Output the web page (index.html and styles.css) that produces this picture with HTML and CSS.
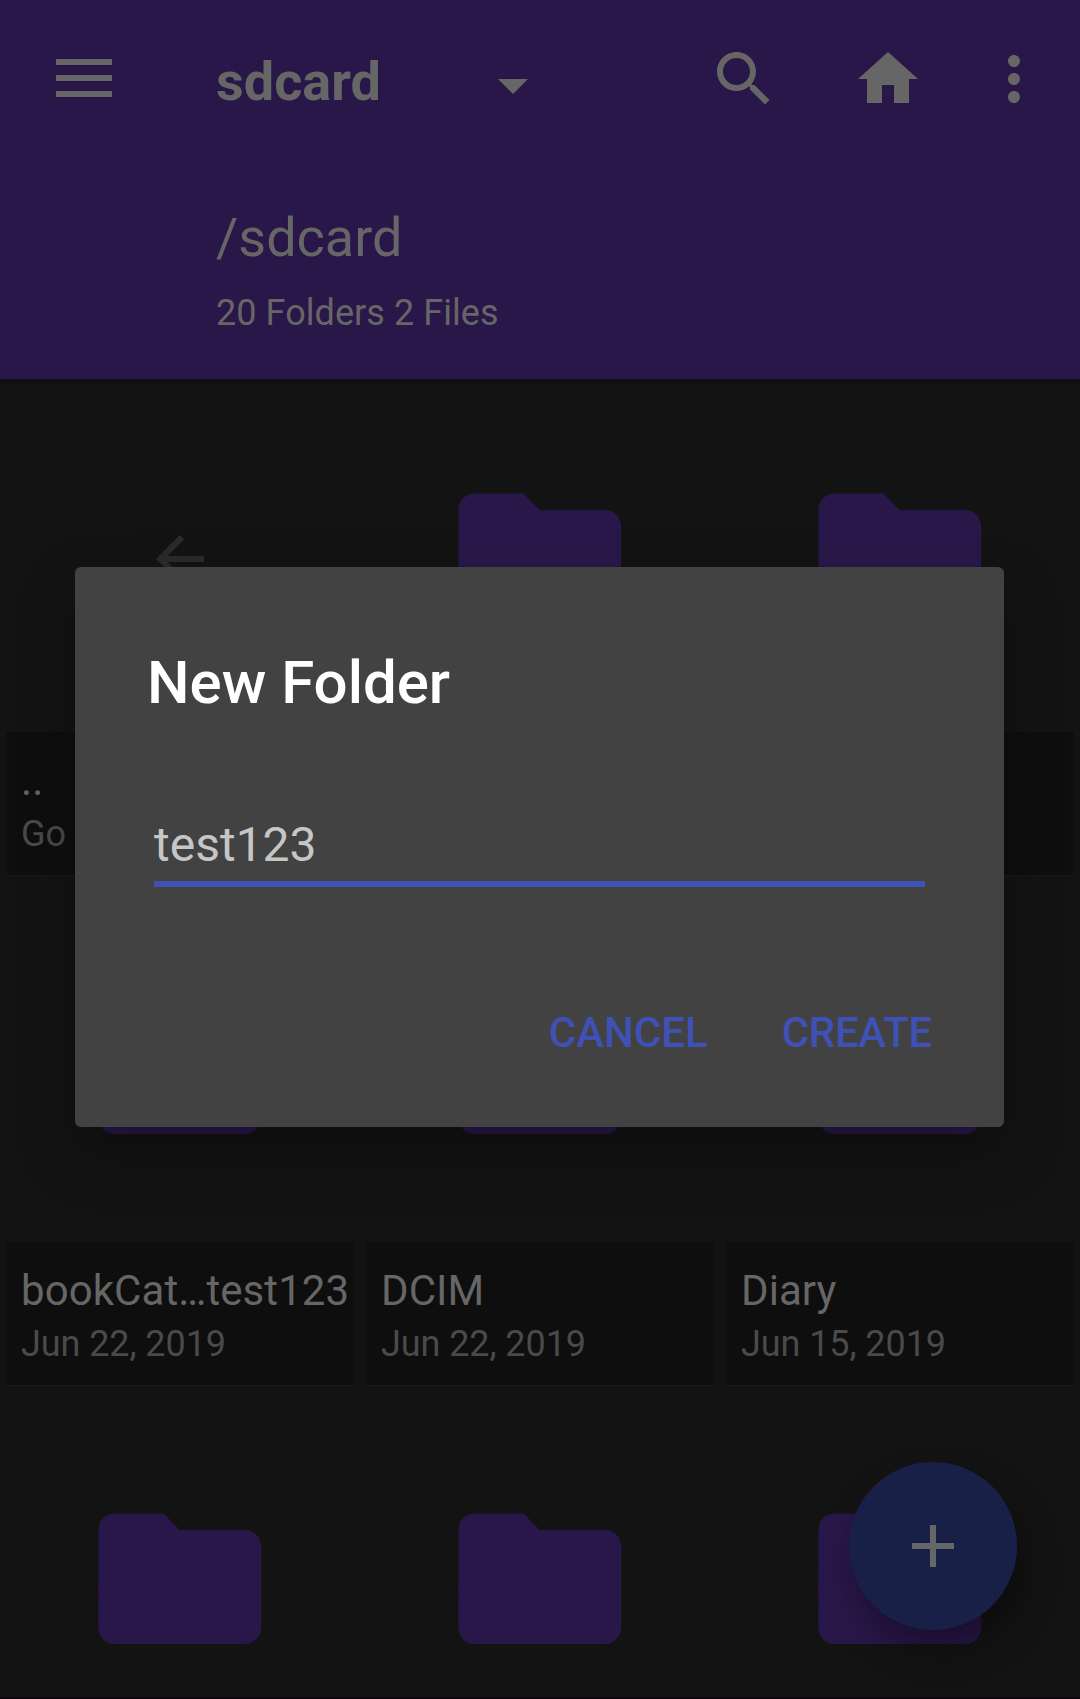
FILE: index.html
```html
<!DOCTYPE html>
<html lang="en">
<head>
<meta charset="utf-8">
<title>sdcard</title>
<link rel="stylesheet" href="styles.css">
</head>
<body>
<svg class="defs" width="0" height="0" aria-hidden="true">
  <symbol id="folder" viewBox="0 0 24 24"><path d="M10 4H4c-1.1 0-1.99.9-1.99 2L2 18c0 1.1.9 2 2 2h16c1.1 0 2-.9 2-2V8c0-1.1-.9-2-2-2h-8l-2-2z"/></symbol>
</svg>
<div class="screen">
  <header class="appbar">
    <div class="toolbar">
      <svg class="menu" viewBox="0 0 56 38"><path d="M0 0h56v6H0zM0 16h56v6H0zM0 32h56v6H0z"/></svg>
      <h1 class="title">sdcard</h1>
      <svg class="caret" viewBox="0 0 30 15"><path d="M0 0h30L15 15z"/></svg>
      <div class="actions">
        <svg class="icon" viewBox="0 0 24 24"><path d="M15.5 14h-.79l-.28-.27C15.41 12.59 16 11.11 16 9.5 16 5.91 13.09 3 9.5 3S3 5.91 3 9.5 5.91 16 9.5 16c1.61 0 3.09-.59 4.23-1.57l.27.28v.79l5 4.99L20.49 19l-4.99-5zm-6 0C7.01 14 5 11.99 5 9.5S7.01 5 9.5 5 14 7.01 14 9.5 11.99 14 9.5 14z"/></svg>
        <svg class="icon" viewBox="0 0 24 24"><path d="M10 20v-6h4v6h5v-8h3L12 3 2 12h3v8z"/></svg>
        <svg class="icon more" viewBox="0 0 24 24"><path d="M12 8c1.1 0 2-.9 2-2s-.9-2-2-2-2 .9-2 2 .9 2 2 2zm0 2c-1.1 0-2 .9-2 2s.9 2 2 2 2-.9 2-2-.9-2-2-2zm0 6c-1.1 0-2 .9-2 2s.9 2 2 2 2-.9 2-2-.9-2-2-2z"/></svg>
      </div>
    </div>
    <div class="path">/sdcard</div>
    <div class="count">20 Folders 2 Files</div>
  </header>
  <main class="grid">
    <div class="tile">
      <div class="thumb"><svg class="back" viewBox="0 0 24 24"><path d="M20 11H7.83l5.59-5.59L12 4l-8 8 8 8 1.41-1.41L7.83 13H20v-2z"/></svg></div>
      <div class="label"><div class="name">..</div><div class="date">Go</div></div>
    </div>
    <div class="tile"><div class="thumb"><svg class="folder"><use href="#folder"/></svg></div><div class="label"></div></div>
    <div class="tile"><div class="thumb"><svg class="folder"><use href="#folder"/></svg></div><div class="label"></div></div>
    <div class="tile">
      <div class="thumb"><svg class="folder"><use href="#folder"/></svg></div>
      <div class="label"><div class="name">bookCat…test123</div><div class="date">Jun 22, 2019</div></div>
    </div>
    <div class="tile">
      <div class="thumb"><svg class="folder"><use href="#folder"/></svg></div>
      <div class="label"><div class="name">DCIM</div><div class="date">Jun 22, 2019</div></div>
    </div>
    <div class="tile">
      <div class="thumb"><svg class="folder"><use href="#folder"/></svg></div>
      <div class="label"><div class="name">Diary</div><div class="date">Jun 15, 2019</div></div>
    </div>
    <div class="tile"><div class="thumb"><svg class="folder"><use href="#folder"/></svg></div></div>
    <div class="tile"><div class="thumb"><svg class="folder"><use href="#folder"/></svg></div></div>
    <div class="tile"><div class="thumb"><svg class="folder"><use href="#folder"/></svg></div></div>
  </main>
  <div class="fab"><svg viewBox="0 0 24 24"><path d="M19 13h-6v6h-2v-6H5v-2h6V5h2v6h6v2z"/></svg></div>
  <section class="dialog">
    <h2 class="dialog-title">New Folder</h2>
    <div class="field">test123</div>
    <div class="buttons"><span>CANCEL</span><span class="create">CREATE</span></div>
  </section>
</div>
</body>
</html>
```
FILE: styles.css
```css
* { box-sizing: border-box; margin: 0; padding: 0; }
body { background: #131313; font-family: Roboto, "Liberation Sans", sans-serif; overflow: hidden; }
svg { display: block; flex: none; fill: #666; }
.defs { position: absolute; }
.screen { position: relative; width: 1080px; height: 1699px; overflow: hidden; background: #131313; border-bottom: 2px solid #0c070b; }

.appbar { height: 379px; background: #291749; color: #666; box-shadow: 0 2px 6px rgba(0, 0, 0, .3); }
.toolbar { display: flex; align-items: center; height: 158px; padding: 0 30px 0 56px; }
.menu { width: 56px; height: 38px; margin-bottom: 2px; }
.title { width: 282px; margin: 6px 0 0 104px; font-size: 54px; font-weight: 700; line-height: 60px; }
.caret { width: 30px; height: 15px; margin-top: 15px; }
.actions { display: flex; gap: 72px; margin-left: 180px; }
.icon { width: 72px; height: 72px; }
.more { margin-left: -18px; }
.path { margin: 50px 0 0 216px; font-size: 54px; line-height: 60px; }
.count { margin: 23px 0 0 216px; font-size: 36px; line-height: 44px; letter-spacing: .06px; }

.grid { display: grid; grid-template-columns: repeat(3, 348px); gap: 19px 12px; padding: 6px 6px 0; }
.thumb { display: flex; align-items: center; justify-content: center; height: 347px; }
.folder { width: 195.5px; height: 195.5px; fill: #291749; }
.back { width: 72px; height: 72px; fill: #2b2b2b; }
.label { height: 144px; padding: 24px 0 0 15px; background: #0e0e0e; border-bottom: 1px solid #1a1a1a; border-radius: 0 0 5px 5px; white-space: nowrap; }
.name { color: #666; font-size: 42px; line-height: 50px; letter-spacing: .08px; }
.date { margin-top: 6px; color: #4a4a4a; font-size: 36px; line-height: 44px; letter-spacing: -.08px; }

.fab { position: absolute; left: 849px; top: 1462px; display: flex; align-items: center; justify-content: center; width: 168px; height: 168px; border-radius: 50%; background: #192048; box-shadow: 8px 20px 36px rgba(0, 0, 0, .38); }
.fab svg { width: 72px; height: 72px; }

.dialog { position: absolute; left: 75px; top: 567px; width: 929px; height: 560px; padding: 83px 72px 0; border-radius: 6px; background: #424242; box-shadow: 0 26px 60px rgba(0, 0, 0, .3); }
.dialog-title { color: #fff; font-size: 60px; font-weight: 500; line-height: 66px; }
.field { height: 66px; margin: 105px 0 0 7px; width: 771px; color: #c6c6c6; font-size: 48px; line-height: 48px; border-bottom: 6px solid #3f51b5; }
.buttons { display: flex; justify-content: flex-end; gap: 74px; margin-top: 121px; color: #3f51b5; font-size: 42px; font-weight: 500; line-height: 50px; }
.create { letter-spacing: -.3px; }
```
